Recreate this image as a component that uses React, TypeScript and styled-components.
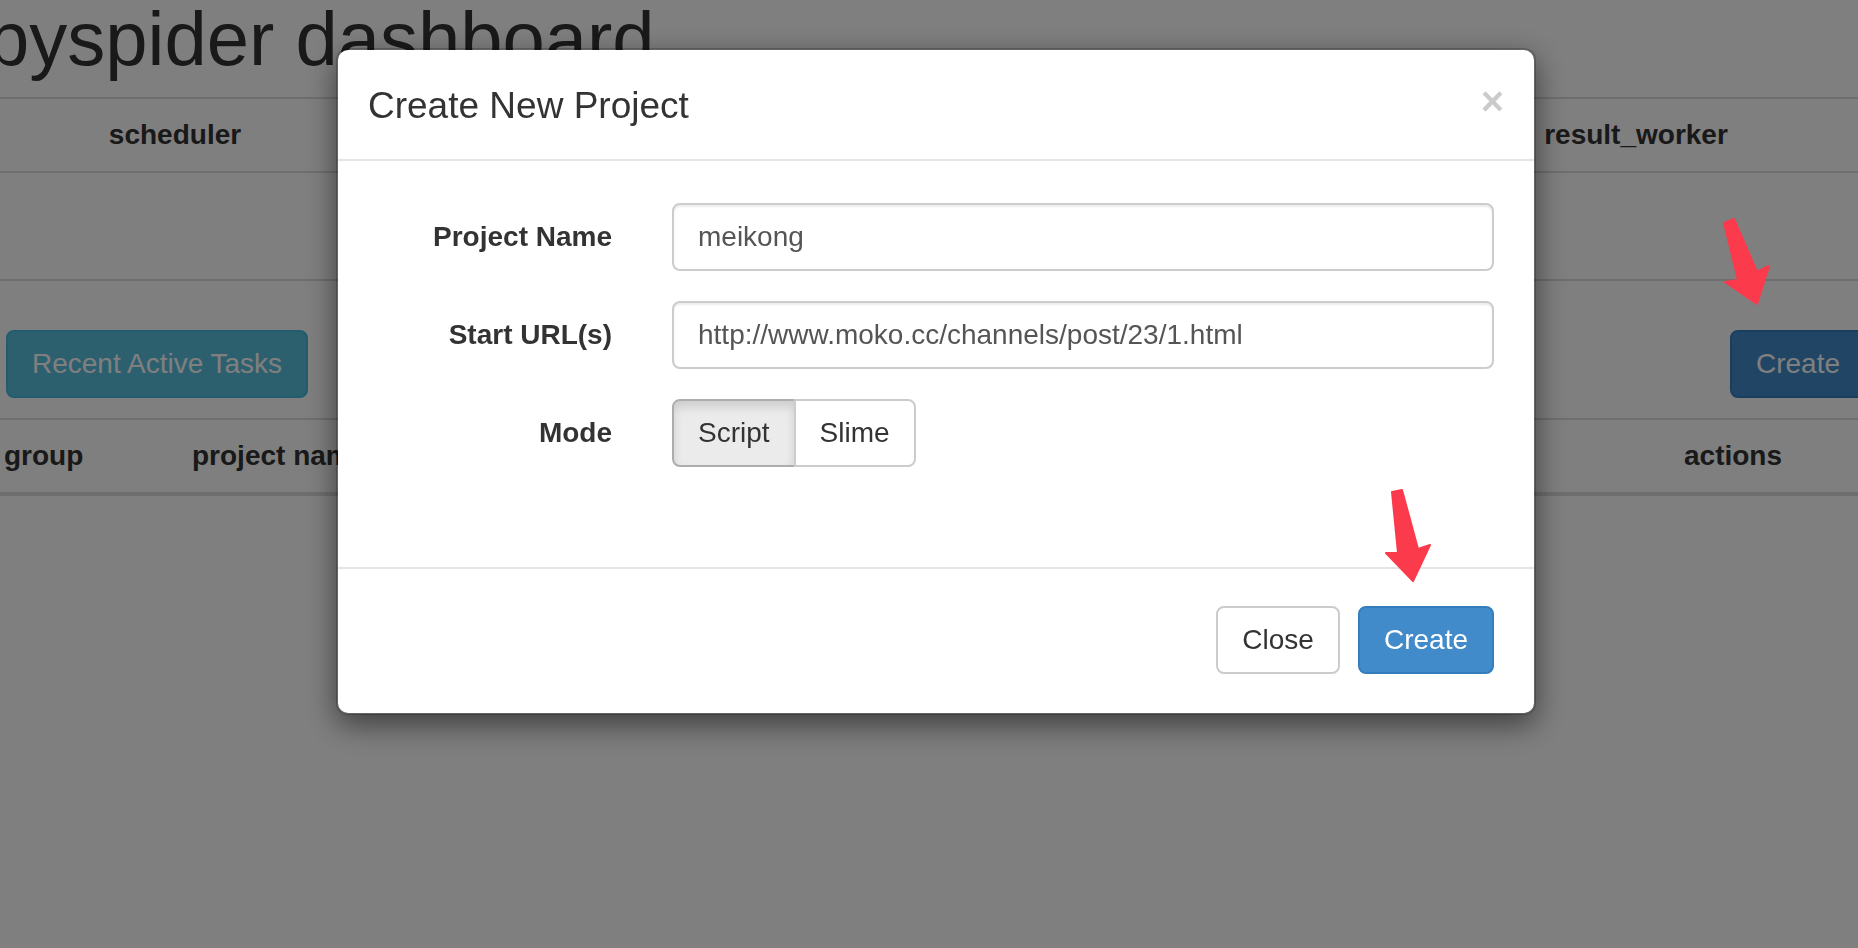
import React from "react";
import styled, { createGlobalStyle } from "styled-components";

const GlobalStyle = createGlobalStyle`
  html, body {
    margin: 0;
    padding: 0;
    width: 1858px;
    height: 948px;
    overflow: hidden;
    background: #fff;
  }
  body {
    font-family: "Helvetica Neue", Helvetica, "Liberation Sans", Arial, sans-serif;
    color: #333;
    font-size: 28px;
    line-height: 40px;
  }
  * { box-sizing: border-box; }
`;

const Page = styled.div`
  margin-left: -12px;
  width: 1878px;
`;

const Title = styled.h1`
  font-size: 76px;
  line-height: 82px;
  font-weight: 500;
  margin: -2px 0 17px -1px;
  white-space: nowrap;
`;

const QueueTable = styled.div`
  display: grid;
  grid-template-columns: 374px 1fr 1fr 460px;
  border-top: 2px solid #ddd;
`;

const QueueHead = styled.div`
  font-weight: bold;
  text-align: center;
  padding: 16px;
  line-height: 40px;
  border-bottom: 2px solid #ddd;
`;

const QueueCell = styled.div`
  height: 108px;
  border-bottom: 2px solid #ddd;
`;

const ButtonRow = styled.div`
  display: flex;
  justify-content: space-between;
  align-items: center;
  margin-top: 49px;
  padding-left: 18px;
`;

const Btn = styled.button<{ $variant: "default" | "primary" | "info" | "active" }>`
  font-family: inherit;
  font-size: 28px;
  line-height: 40px;
  padding: 12px 24px;
  border-radius: 8px;
  border: 2px solid
    ${(p) =>
      p.$variant === "primary"
        ? "#357ebd"
        : p.$variant === "info"
        ? "#46b8da"
        : p.$variant === "active"
        ? "#adadad"
        : "#ccc"};
  background: ${(p) =>
    p.$variant === "primary"
      ? "#428bca"
      : p.$variant === "info"
      ? "#5bc0de"
      : p.$variant === "active"
      ? "#ebebeb"
      : "#fff"};
  color: ${(p) => (p.$variant === "primary" || p.$variant === "info" ? "#fff" : "#333")};
  box-shadow: ${(p) => (p.$variant === "active" ? "inset 0 6px 10px rgba(0,0,0,0.125)" : "none")};
  white-space: nowrap;
  cursor: pointer;
`;

const ProjectTable = styled.div`
  display: grid;
  grid-template-columns: 188px 1492px 1fr;
  margin-top: 20px;
  border-top: 2px solid #ddd;
  border-bottom: 4px solid #ddd;
`;

const ProjectHead = styled.div`
  font-weight: bold;
  padding: 16px;
  line-height: 40px;
  white-space: nowrap;
`;

const Backdrop = styled.div`
  position: fixed;
  inset: 0;
  background: rgba(0, 0, 0, 0.5);
`;

const ModalLayer = styled.div`
  position: fixed;
  inset: 0;
`;

const Dialog = styled.div`
  width: 1200px;
  margin: 48px 0 0 336px;
  background: #fff;
  background-clip: padding-box;
  border: 2px solid rgba(0, 0, 0, 0.2);
  border-radius: 12px;
  box-shadow: 0 10px 30px rgba(0, 0, 0, 0.5);
`;

const Header = styled.div`
  display: flex;
  align-items: center;
  justify-content: space-between;
  padding: 32px 30px 29px;
  border-bottom: 2px solid #e5e5e5;
`;

const ModalTitle = styled.h4`
  margin: 0;
  font-size: 37px;
  line-height: 48px;
  font-weight: 500;
  color: #333;
`;

const CloseX = styled.button`
  align-self: flex-start;
  margin-top: -2px;
  padding: 0;
  border: 0;
  background: transparent;
  font-family: inherit;
  font-size: 40px;
  font-weight: bold;
  line-height: 42px;
  color: #000;
  opacity: 0.2;
  cursor: pointer;
`;

const Body = styled.div`
  padding: 42px 40px 40px;
`;

const FormGroup = styled.div`
  display: grid;
  grid-template-columns: 234px 1fr;
  column-gap: 60px;
  margin-bottom: 30px;
`;

const Label = styled.label`
  font-weight: bold;
  text-align: right;
  padding-top: 14px;
  line-height: 40px;
  white-space: nowrap;
`;

const Input = styled.input`
  display: block;
  width: 100%;
  height: 68px;
  padding: 12px 24px;
  font-family: inherit;
  font-size: 28px;
  line-height: 40px;
  color: #555;
  background: #fff;
  border: 2px solid #ccc;
  border-radius: 8px;
  box-shadow: inset 0 2px 2px rgba(0, 0, 0, 0.075);
  outline: none;
`;

const BtnGroup = styled.div`
  display: flex;
  & > button:first-child {
    border-top-right-radius: 0;
    border-bottom-right-radius: 0;
  }
  & > button:last-child {
    margin-left: -2px;
    border-top-left-radius: 0;
    border-bottom-left-radius: 0;
  }
`;

const Footer = styled.div`
  display: flex;
  justify-content: flex-end;
  gap: 18px;
  margin-top: 30px;
  padding: 37px 40px 39px;
  border-top: 2px solid #e5e5e5;
`;

const Annotation = styled.svg`
  position: fixed;
  left: 0;
  top: 0;
  width: 1858px;
  height: 948px;
  pointer-events: none;
`;

export default function App() {
  return (
    <>
      <GlobalStyle />
      <Page>
        <Title>pyspider dashboard</Title>
        <QueueTable>
          <QueueHead>scheduler</QueueHead>
          <QueueHead>fetcher</QueueHead>
          <QueueHead>processor</QueueHead>
          <QueueHead>result_worker</QueueHead>
          <QueueCell />
          <QueueCell />
          <QueueCell />
          <QueueCell />
        </QueueTable>
        <ButtonRow>
          <Btn $variant="info">Recent Active Tasks</Btn>
          <Btn $variant="primary">Create</Btn>
        </ButtonRow>
        <ProjectTable>
          <ProjectHead>group</ProjectHead>
          <ProjectHead>project name</ProjectHead>
          <ProjectHead>actions</ProjectHead>
        </ProjectTable>
      </Page>
      <Backdrop />
      <ModalLayer>
        <Dialog>
          <Header>
            <ModalTitle>Create New Project</ModalTitle>
            <CloseX aria-label="Close">×</CloseX>
          </Header>
          <Body>
            <FormGroup>
              <Label>Project Name</Label>
              <Input defaultValue="meikong" />
            </FormGroup>
            <FormGroup>
              <Label>Start URL(s)</Label>
              <Input defaultValue="http://www.moko.cc/channels/post/23/1.html" />
            </FormGroup>
            <FormGroup>
              <Label>Mode</Label>
              <BtnGroup>
                <Btn $variant="active">Script</Btn>
                <Btn $variant="default">Slime</Btn>
              </BtnGroup>
            </FormGroup>
          </Body>
          <Footer>
            <Btn $variant="default">Close</Btn>
            <Btn $variant="primary">Create</Btn>
          </Footer>
        </Dialog>
      </ModalLayer>
      <Annotation viewBox="0 0 1858 948">
        <path
          d="M1724,223 L1734,219 L1757,272 L1769,266 L1757,304 L1725,282 L1738,280 Z"
          fill="#fb3a4c"
          stroke="#fb3a4c"
          strokeWidth="2"
          strokeLinejoin="round"
        />
        <path
          d="M1392,492 L1402,490 L1418,549 L1430,545 L1413,581 L1386,553 L1398,553 Z"
          fill="#fb3a4c"
          stroke="#fb3a4c"
          strokeWidth="2"
          strokeLinejoin="round"
        />
      </Annotation>
    </>
  );
}
